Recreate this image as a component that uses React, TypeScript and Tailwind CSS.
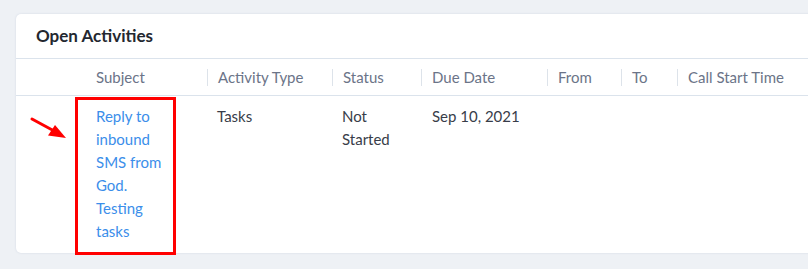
import React from "react";

type Col = { label: string; w: string; first?: boolean };

const cols: Col[] = [
  { label: "Subject", w: "w-[131px]", first: true },
  { label: "Activity Type", w: "w-[125px]" },
  { label: "Status", w: "w-[89px]" },
  { label: "Due Date", w: "w-[126px]" },
  { label: "From", w: "w-[74px]" },
  { label: "To", w: "w-[56px]" },
  { label: "Call Start Time", w: "w-[160px]" },
];

function Arrow() {
  return (
    <svg
      className="absolute left-[28px] top-[114px]"
      width="44"
      height="30"
      viewBox="0 0 44 30"
    >
      <line x1="4" y1="5" x2="28" y2="18" stroke="#ff0000" strokeWidth="3" strokeLinecap="round" />
      <polygon points="38,24 20,21.5 27,11" fill="#ff0000" />
    </svg>
  );
}

export default function App() {
  return (
    <div
      className="relative h-[269px] w-[808px] overflow-hidden bg-[#eef1f5] pl-[16px] pt-[14px]"
      style={{ fontFamily: "Lato, 'Open Sans', sans-serif" }}
    >
      <div className="w-[830px] rounded-[5px] bg-white shadow-[0_0_2px_rgba(120,140,170,0.25)]">
        <div className="flex h-[45px] items-center border-b border-[#dbe3ec] pl-[20px]">
          <h2 className="text-[17px] font-bold text-[#23272f]">Open Activities</h2>
        </div>

        <div className="flex h-[37px] items-center border-b border-[#dbe3ec] text-[15px] text-[#6b7488]">
          <div className="w-[60px] shrink-0" />
          {cols.map((c) => (
            <div key={c.label} className={`${c.w} flex shrink-0 items-center`}>
              {!c.first && <span className="h-[17px] w-px bg-[#dde3ea]" />}
              <span className={c.first ? "pl-[20px]" : "pl-[10px]"}>{c.label}</span>
            </div>
          ))}
        </div>

        <div className="flex h-[157px] text-[15px] leading-[23px] text-[#383d49]">
          <div className="w-[59px] shrink-0" />
          <div className="mt-[1px] h-[158px] w-[101px] shrink-0 border-[3px] border-[#ff0000] pl-[18px] pt-[5px]">
            <a className="block w-[74px] text-[#3b8eea]">Reply to inbound SMS from God. Testing tasks</a>
          </div>
          <div className="w-[31px] shrink-0" />
          <div className="w-[125px] shrink-0 pl-[10px] pt-[9px]">Tasks</div>
          <div className="w-[89px] shrink-0 pl-[10px] pt-[9px]">
            <div className="w-[60px]">Not Started</div>
          </div>
          <div className="w-[126px] shrink-0 pl-[11px] pt-[9px]">Sep 10, 2021</div>
        </div>
      </div>
      <Arrow />
    </div>
  );
}
